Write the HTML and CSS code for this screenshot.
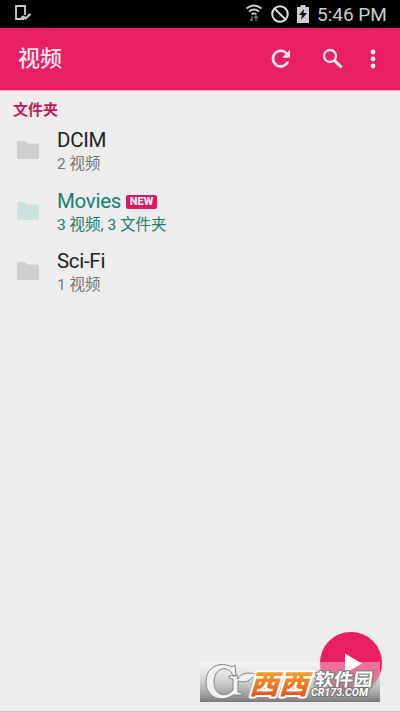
FILE: index.html
```html
<!DOCTYPE html>
<html lang="zh-CN">
<head>
<meta charset="utf-8">
<title>视频</title>
<link rel="stylesheet" href="styles.css">
</head>
<body>
<div class="screen">
  <div class="status">
    <svg class="status-device" width="18" height="18" viewBox="0 0 18 18" fill="none" stroke="#ccc" stroke-width="1.8"><path d="M10 15H2V2H11V11M7 15l2-3"/><path d="M9 12l2.500 2.500 5-4.500" stroke-width="2.200"/></svg>
    <svg class="status-wifi" width="18" height="20" viewBox="0 0 18 20" fill="none" stroke="#ccc" stroke-width="1.800"><path d="M1.500 5.500Q9-.500 16.500 5.500M4 8.500Q9 4.500 14 8.500M6.500 11.200Q9 9.500 11.500 11.200"/><path d="M7 13v5m-2-2 2 2M11 18v-5m-2 2 2-2 2 2" stroke="#777" stroke-width="1.300"/></svg>
    <svg class="status-block" width="18" height="18" viewBox="0 0 18 18" fill="none" stroke="#ddd" stroke-width="2"><circle cx="9" cy="9" r="7.800"/><path d="M3.500 3.500l11 11"/></svg>
    <svg class="status-battery" width="12" height="18" viewBox="0 0 12 18"><path fill="#ccc" d="M3.500 0h5v2H12v16H0V2h3.500z"/><path fill="#111" d="M7 4L2 10h3l-1 5 6-7H6.500z"/></svg>
    <span class="clock">5:46 PM</span>
  </div>
  <header class="toolbar">
    <h1 class="title">视频</h1>
    <svg class="refresh" width="20" height="20" viewBox="0 0 20 20"><path fill="none" stroke="#ffe9f2" stroke-width="2.600" d="M15.500 4.300A7.800 7.800 0 1 0 17 12.500"/><path fill="#ffe9f2" d="M19 .800V8.800H11z"/></svg>
    <svg class="search" width="22" height="22" viewBox="0 0 22 22" fill="none" stroke="#ffe9f2"><circle cx="8" cy="8" r="6" stroke-width="2.300"/><path d="M12.300 12.300l7.400 7.200" stroke-width="3"/></svg>
    <svg class="more" width="6" height="20" viewBox="0 0 6 20" fill="#ffe9f2"><circle cx="3" cy="3" r="2.400"/><circle cx="3" cy="10" r="2.400"/><circle cx="3" cy="17" r="2.400"/></svg>
  </header>
  <main class="content">
    <h2 class="section">文件夹</h2>
    <div class="row">
      <svg class="folder" width="22" height="18" viewBox="0 0 22 18"><path d="M1.500 0H8l2.500 2.500h10Q22 2.500 22 4v12.500q0 1.500-1.500 1.500h-19Q0 18 0 16.500v-15Q0 0 1.500 0z"/></svg>
      <div class="info"><div class="name">DCIM</div><div class="meta">2 视频</div></div>
    </div>
    <div class="row fresh">
      <svg class="folder" width="22" height="18" viewBox="0 0 22 18"><path d="M1.500 0H8l2.500 2.500h10Q22 2.500 22 4v12.500q0 1.500-1.500 1.500h-19Q0 18 0 16.500v-15Q0 0 1.500 0z"/></svg>
      <div class="info"><div class="name">Movies<span class="badge">NEW</span></div><div class="meta">3 视频, 3 文件夹</div></div>
    </div>
    <div class="row">
      <svg class="folder" width="22" height="18" viewBox="0 0 22 18"><path d="M1.500 0H8l2.500 2.500h10Q22 2.500 22 4v12.500q0 1.500-1.500 1.500h-19Q0 18 0 16.500v-15Q0 0 1.500 0z"/></svg>
      <div class="info"><div class="name">Sci-Fi</div><div class="meta">1 视频</div></div>
    </div>
  </main>
  <div class="fab"><svg width="62" height="62" viewBox="0 0 62 62"><path fill="#fff" d="M25 21.500L42 31.500 25 41.500z"/></svg></div>
  <svg class="watermark" width="180" height="40" viewBox="0 0 180 40">
    <defs>
      <linearGradient id="shade" x2="0" y2="1"><stop offset="0" stop-color="#fff" stop-opacity=".35"/><stop offset=".25" stop-color="#ddd" stop-opacity=".45"/><stop offset="1" stop-color="#707070" stop-opacity=".92"/></linearGradient>
      <linearGradient id="orange" x2="0" y2="1"><stop offset=".15" stop-color="#f3b02e"/><stop offset=".9" stop-color="#e5501c"/></linearGradient>
    </defs>
    <rect width="180" height="40" fill="url(#shade)"/>
    <path fill="#f2f2f2" stroke="#858585" stroke-width="1" fill-rule="evenodd" d="M32 5L35 3L36 14H33C30 3 14 4 14 20C14 34 26 36 33 28V17L29 16V14L37 13L38 17C41 11 48 10 55 12C51 19 45 21 38 19V30L42 31V33H33C22 41 6 36 6 20C6 4 21-1 32 5z"/>
    <g stroke="#fff" stroke-width="4" stroke-linejoin="round" paint-order="stroke">
      <text class="brand-west" fill="url(#orange)" transform="translate(49 31.500) skewX(-17) scale(1.080 1)">西</text>
      <text class="brand-west" fill="url(#orange)" transform="translate(78.500 31.500) skewX(-17) scale(1.080 1)">西</text>
    </g>
    <g fill="#fff" stroke="#777" stroke-width="2" stroke-linejoin="round" paint-order="stroke">
      <text class="brand-cn" textLength="58" lengthAdjust="spacingAndGlyphs" transform="translate(114 23.500) skewX(-7)">软件园</text>
      <text class="brand-url" x="111" y="34" textLength="57" lengthAdjust="spacingAndGlyphs">CR173.COM</text>
    </g>
  </svg>
</div>
</body>
</html>
```
FILE: styles.css
```css
* { box-sizing: border-box; }
body { margin: 0; }
.screen {
  position: relative;
  width: 400px;
  height: 712px;
  overflow: hidden;
  background: #ededed;
  border-bottom: 1px solid #c9c9c9;
  font-family: Roboto, "Noto Sans CJK SC", sans-serif;
}
.status {
  display: flex;
  height: 28px;
  background: #000;
  color: #ccc;
}
.status-device { margin: 4px 0 0 14px; }
.status-wifi { margin: 3px 0 0 213px; }
.status-block { margin: 5px 0 0 8px; }
.status-battery { margin: 5px 0 0 8px; }
.clock {
  margin-left: 8px;
  font-size: 19px;
  line-height: 29px;
  white-space: nowrap;
}
.toolbar {
  display: flex;
  align-items: center;
  height: 63px;
  padding-left: 18px;
  background: #e91e63;
  border-bottom: 1px solid #f7a4c0;
}
.title {
  width: 253px;
  margin: 0;
  color: #ffe9f2;
  font-size: 22px;
  font-weight: 500;
  line-height: 32px;
}
.search { margin-left: 31px; }
.more { margin-left: 26px; }
.section {
  margin: 0;
  padding: 8px 0 0 13px;
  color: #c2185b;
  font-size: 15px;
  font-weight: 700;
  line-height: 22px;
}
.row {
  display: flex;
  height: 60.5px;
  padding-left: 17px;
}
.section + .row { margin-top: 7px; }
.folder { margin-top: 13px; fill: #cfcfcf; }
.info { margin-left: 18px; color: #222; }
.name {
  display: flex;
  height: 25px;
  font-size: 20.5px;
  letter-spacing: -0.3px;
  line-height: 25px;
}
.meta {
  color: #777;
  font-size: 15.5px;
  line-height: 23px;
  white-space: nowrap;
}
.fresh .name, .fresh .meta { color: #16806f; }
.fresh .folder { fill: #cce1dd; }
.badge {
  width: 31px;
  height: 14px;
  margin: 6px 0 0 5px;
  border-radius: 2px;
  background: #d81b60;
  color: #ffe9f2;
  font-size: 11px;
  font-weight: 900;
  letter-spacing: 0;
  line-height: 14px;
  text-align: center;
}
.fab {
  position: absolute;
  left: 320px;
  top: 632px;
  width: 62px;
  height: 62px;
  border-radius: 50%;
  background: #e91e63;
  box-shadow: 0 1px 2px #bbb;
}
.watermark { position: absolute; left: 200px; top: 662px; }
.brand-west { font: 900 27px "Noto Sans CJK SC", sans-serif; }
.brand-cn { font: 700 18px "Noto Sans CJK SC", sans-serif; }
.brand-url { font: italic 700 10px Roboto, sans-serif; }
```
